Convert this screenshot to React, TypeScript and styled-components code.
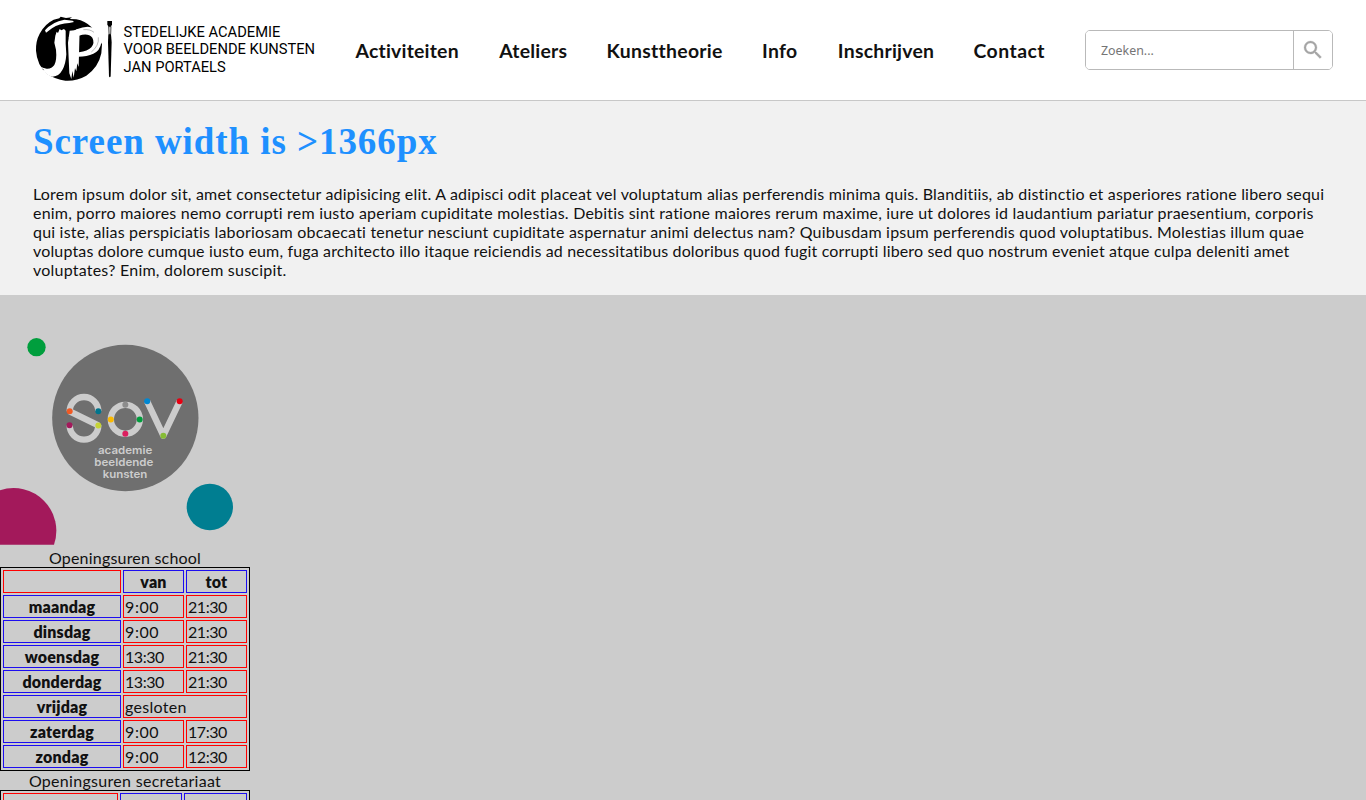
import React from 'react';
import styled, { createGlobalStyle } from 'styled-components';

const GlobalStyle = createGlobalStyle`
  * { box-sizing: border-box; }
  body {
    margin: 0;
    background: #ccc;
    color: #111;
    font: 16px/19px Lato, sans-serif;
    overflow: hidden;
  }
`;

const Page = styled.div`
  height: 800px;
  overflow: hidden;
`;

const Header = styled.header`
  display: flex;
  align-items: center;
  height: 101px;
  padding: 0 33px 1px 30px;
  background: #fff;
  border-bottom: 1px solid #c8c8c8;
`;

const Brand = styled.div`
  display: flex;
  align-items: center;
  flex: 0 0 325.5px;
`;

const BrandMark = styled.svg`
  flex: none;
  width: 90px;
  height: 80px;
`;

const BrandName = styled.div`
  margin-left: 3.5px;
  padding-top: 1.6px;
  color: #000;
  font: 14.7px/17.8px Roboto, sans-serif;
  white-space: nowrap;
`;

const Nav = styled.nav`
  display: flex;
  flex: 0 0 729.5px;
  padding-top: 2px;
`;

const NavLink = styled.a<{ $width: number; $tracking: number }>`
  flex: 0 0 ${(p) => p.$width}px;
  font: bold 19.4px/24px Lato, sans-serif;
  font-variant-ligatures: none;
  letter-spacing: ${(p) => p.$tracking}px;
  white-space: nowrap;
`;

const SearchForm = styled.form`
  display: flex;
  width: 248px;
  height: 40px;
  border: 1px solid #b9b9b9;
  border-radius: 5px;
  overflow: hidden;
`;

const SearchInput = styled.input`
  flex: 1;
  min-width: 0;
  padding: 2px 15px 0;
  border: 0;
  background: #fff;
  font: 12.4px "Noto Sans", sans-serif;
  &::placeholder {
    color: #757575;
    opacity: 1;
  }
`;

const SearchButton = styled.button`
  display: flex;
  align-items: center;
  justify-content: center;
  width: 39px;
  padding: 0;
  border: 0;
  border-left: 1px solid #b9b9b9;
  background: #fff;
`;

const Intro = styled.main`
  height: 194px;
  padding: 21px 33px 0;
  background: #f1f1f1;
`;

const Title = styled.h1`
  margin: 0 0 22px;
  color: #1e90ff;
  font: bold 37px/40px "Liberation Serif", serif;
  letter-spacing: 0.93px;
  white-space: nowrap;
`;

const Paragraph = styled.p`
  margin: 0;
`;

const Line = styled.span<{ $tracking: number }>`
  display: block;
  letter-spacing: ${(p) => p.$tracking}px;
  white-space: nowrap;
`;

const Sidebar = styled.aside`
  width: 250px;
`;

const SchoolLogo = styled.svg`
  display: block;
  width: 250px;
  height: 250px;
  margin-bottom: 3px;
`;

const Hours = styled.table`
  width: 250px;
  table-layout: fixed;
  border: 1px solid #000;
  border-spacing: 2px;
`;

const Caption = styled.caption<{ $tracking: number }>`
  height: 19px;
  letter-spacing: ${(p) => p.$tracking}px;
`;

const Col = styled.col<{ $width: number }>`
  width: ${(p) => p.$width}px;
`;

const HeadCell = styled.th`
  height: 23px;
  padding: 1px;
  border: 1px solid #1d0df0;
  font-weight: 800;
  letter-spacing: 0.2px;
`;

const Cell = styled.td<{ $tracking?: number }>`
  height: 23px;
  padding: 1px;
  border: 1px solid #f00;
  letter-spacing: ${(p) => p.$tracking ?? 0}px;
`;

const navigation = [
  { label: 'Activiteiten', width: 143.7, tracking: 0.22 },
  { label: 'Ateliers', width: 107.4, tracking: 0.22 },
  { label: 'Kunsttheorie', width: 155.4, tracking: 0.3 },
  { label: 'Info', width: 75.9, tracking: 0.35 },
  { label: 'Inschrijven', width: 135.6, tracking: 0.24 },
  { label: 'Contact', width: 71.5, tracking: 0.48 },
];

const lines: [string, number][] = [
  ['Lorem ipsum dolor sit, amet consectetur adipisicing elit. A adipisci odit placeat vel voluptatum alias perferendis minima quis. Blanditiis, ab distinctio et asperiores ratione libero sequi', 0.193],
  ['enim, porro maiores nemo corrupti rem iusto aperiam cupiditate molestias. Debitis sint ratione maiores rerum maxime, iure ut dolores id laudantium pariatur praesentium, corporis', 0.209],
  ['qui iste, alias perspiciatis laboriosam obcaecati tenetur nesciunt cupiditate aspernatur animi delectus nam? Quibusdam ipsum perferendis quod voluptatibus. Molestias illum quae', 0.194],
  ['voluptas dolore cumque iusto eum, fuga architecto illo itaque reiciendis ad necessitatibus doloribus quod fugit corrupti libero sed quo nostrum eveniet atque culpa deleniti amet', 0.152],
  ['voluptates? Enim, dolorem suscipit.', 0.22],
];

const schoolHours: [string, string, string?][] = [
  ['maandag', '9:00', '21:30'],
  ['dinsdag', '9:00', '21:30'],
  ['woensdag', '13:30', '21:30'],
  ['donderdag', '13:30', '21:30'],
  ['vrijdag', 'gesloten'],
  ['zaterdag', '9:00', '17:30'],
  ['zondag', '9:00', '12:30'],
];

function PortaelsMark() {
  return (
    <BrandMark viewBox="0 0 270 240" aria-hidden="true">
      <path d="M18 122 Q17 93 29 71 Q44 42 71 29 L88 25 L92 20 L108 24 L126 22 L119 27 L139 28 Q165 33 184 51 Q202 68 210 92 L216 103 L214 130 Q205 173 169 197 Q139 214 106 212 Q76 208 50 191 Q21 164 18 122Z" fill="#000" />
      <g fill="#fff">
        <path d="M45 61 Q67 35 103 29 L128 32 L132 36 L118 39 Q88 40 66 55 L48 68Z" />
        <path d="M76 77 L80 65 L84 69 L89 57 L94 61 L102 57 L107 62 L107 101 L109 133 Q107 164 97 180 Q87 199 68 200 Q54 199 44 187 L26 180 L43 181 L32 172 L50 176 Q65 177 73 165 Q81 150 78 119 L73 98Z" />
        <path d="M119 62 L134 61 L149 56 L147 134 L146 171 L142 160 L139 184 L135 174 L131 203 L127 183 L124 207 L118 190 L116 145 L114 98Z" />
        <path d="M116 84 Q119 68 140 58 Q177 43 198 58 Q214 71 214 98 Q210 122 190 131 Q171 140 145 140 L147 127 Q173 124 184 112 Q195 98 187 83 Q174 67 147 77Z" />
      </g>
      <path d="M160 59 Q180 57 192 67 M205 82 Q208 107 184 126" fill="none" stroke="#000" strokeWidth="0.8" />
      <path d="M28 169 L52 181" fill="none" stroke="#fff" strokeWidth="1.5" />
      <path d="M232 33 H246 V43 L243 50 H235 L232 43Z" fill="#000" />
      <path d="M236 50 H243 L242 73 H237Z" fill="#ddd" stroke="#000" strokeWidth="2" />
      <path d="M235 73 H243 L245 96 L242 199 Q239 205 237 199 L234 96Z" fill="#000" />
    </BrandMark>
  );
}

const logoDots: [number, number, string][] = [
  [209, 259, '#f15a24'],
  [295, 259, '#00758d'],
  [208.5, 301, '#a3195b'],
  [295, 301.5, '#c6d335'],
  [376, 239.5, '#8c8c8c'],
  [332.5, 283.5, '#fbb900'],
  [419, 283.5, '#009d3c'],
  [376, 326.5, '#dc1f5f'],
  [441.5, 229, '#0087d2'],
  [539, 229, '#e60012'],
  [490, 332, '#86bc35'],
];

function SovLogo() {
  return (
    <SchoolLogo viewBox="0 -90 750 750" role="img" aria-label="SOV academie beeldende kunsten">
      <circle cx="109.5" cy="66.5" r="27.5" fill="#009e3d" />
      <circle cx="376" cy="279" r="219.5" fill="#6f6f6f" />
      <path d="M0 496 A128 128 0 0 1 162 659 H0Z" fill="#a3195b" />
      <circle cx="629.5" cy="546" r="69.5" fill="#007e91" />
      <g fill="none" stroke="#ccc" strokeWidth="19">
        <path d="M209 259 A43 43 0 0 1 295 259 M209 259 L295 301 M209 301 A43 43 0 0 0 295 301" />
        <circle cx="376" cy="283" r="43.5" />
        <path d="M441.5 229 L490 332 L539 229" strokeLinejoin="round" />
      </g>
      {logoDots.map(([x, y, fill]) => (
        <circle key={`${x}-${y}`} cx={x} cy={y} r="9" fill={fill} />
      ))}
      <g fill="#ccc" fontFamily="Inter, sans-serif" fontSize="32" fontWeight="600">
        <text x="294" y="388" textLength="163" lengthAdjust="spacingAndGlyphs">academie</text>
        <text x="283" y="424" textLength="177" lengthAdjust="spacingAndGlyphs">beeldende</text>
        <text x="308" y="460" textLength="134" lengthAdjust="spacingAndGlyphs">kunsten</text>
      </g>
    </SchoolLogo>
  );
}

export default function App() {
  return (
    <Page>
      <GlobalStyle />
      <Header>
        <Brand>
          <PortaelsMark />
          <BrandName>
            STEDELIJKE ACADEMIE
            <br />
            VOOR BEELDENDE KUNSTEN
            <br />
            JAN PORTAELS
          </BrandName>
        </Brand>
        <Nav>
          {navigation.map((item) => (
            <NavLink key={item.label} $width={item.width} $tracking={item.tracking}>
              {item.label}
            </NavLink>
          ))}
        </Nav>
        <SearchForm>
          <SearchInput placeholder="Zoeken..." />
          <SearchButton type="button" aria-label="Zoeken">
            <svg width="24" height="24" viewBox="0 0 24 24" fill="#a5a5a5" stroke="#a5a5a5" strokeWidth="0.3">
              <path d="M15.5 14h-.79l-.28-.27A6.471 6.471 0 0 0 16 9.5 6.5 6.5 0 1 0 9.5 16c1.61 0 3.09-.59 4.23-1.57l.27.28v.79l5 4.99L20.49 19l-4.99-5zm-6 0C7.01 14 5 11.99 5 9.5S7.01 5 9.5 5 14 7.01 14 9.5 11.99 14 9.5 14z" />
            </svg>
          </SearchButton>
        </SearchForm>
      </Header>
      <Intro>
        <Title>Screen width is &gt;1366px</Title>
        <Paragraph>
          {lines.map(([text, tracking]) => (
            <Line key={text} $tracking={tracking}>
              {text}{' '}
            </Line>
          ))}
        </Paragraph>
      </Intro>
      <Sidebar>
        <SovLogo />
        <Hours>
          <Caption $tracking={0.2}>Openingsuren school</Caption>
          <colgroup>
            <Col $width={118} />
            <Col $width={61} />
            <Col $width={61} />
          </colgroup>
          <tbody>
            <tr>
              <Cell />
              <HeadCell>van</HeadCell>
              <HeadCell>tot</HeadCell>
            </tr>
            {schoolHours.map(([day, from, to]) => (
              <tr key={day}>
                <HeadCell>{day}</HeadCell>
                {to ? (
                  <>
                    <Cell $tracking={from.length === 4 ? 0.6 : -0.45}>{from}</Cell>
                    <Cell $tracking={-0.45}>{to}</Cell>
                  </>
                ) : (
                  <Cell colSpan={2} $tracking={0.3}>{from}</Cell>
                )}
              </tr>
            ))}
          </tbody>
        </Hours>
        <Hours>
          <Caption $tracking={0.3}>Openingsuren secretariaat</Caption>
          <colgroup>
            <Col $width={115} />
            <Col $width={62} />
            <Col $width={63} />
          </colgroup>
          <tbody>
            <tr>
              <Cell />
              <HeadCell />
              <HeadCell />
            </tr>
          </tbody>
        </Hours>
      </Sidebar>
    </Page>
  );
}
